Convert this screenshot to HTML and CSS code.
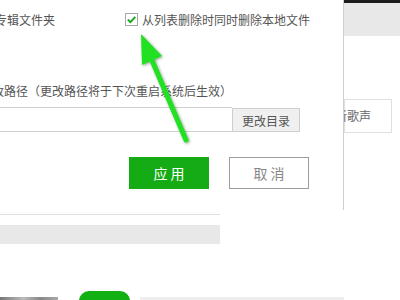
FILE: index.html
```html
<!DOCTYPE html>
<html>

<head>
	<meta charset="utf-8">
	<title>设置</title>
	<link rel="stylesheet" href="styles.css">
</head>

<body>
	<div class="page">
		<div class="main">
			<div class="rule"></div>
			<div class="band"></div>
			<div class="bottom">
				<div class="thumb"></div>
				<div class="pill"></div>
				<div class="line"></div>
			</div>
		</div>
		<div class="side">
			<div class="topbar"></div>
			<div class="tabs"></div>
			<div class="songbox">新歌声</div>
		</div>
	</div>

	<div class="dialog">
		<div class="row-check">
			<span class="album">专辑文件夹</span>
			<label class="check">
				<span class="box">
					<svg width="11" height="11" viewBox="0 0 11 11">
						<path d="M1.8 5.6 L4.4 8.1 L9.3 2.9" fill="none" stroke="#1aa61a" stroke-width="2" />
					</svg>
				</span>
				从列表删除时同时删除本地文件
			</label>
		</div>
		<div class="path-tip">改路径（更改路径将于下次重启系统后生效）</div>
		<div class="path-row">
			<input type="text" class="path-input" value="">
			<button class="btn-dir">更改目录</button>
		</div>
		<div class="actions">
			<button class="btn-ok">应 用</button>
			<button class="btn-cancel">取 消</button>
		</div>
	</div>

	<svg class="arrow" width="400" height="300" viewBox="0 0 400 300">
		<line x1="151" y1="58" x2="186" y2="140" stroke="#22e022" stroke-width="5" stroke-linecap="round" />
		<polygon points="141,34 142,65 162,56" fill="#22e022" />
	</svg>
</body>

</html>
```

FILE: styles.css
```css
body {
	margin: 0;
	width: 400px;
	height: 300px;
	overflow: hidden;
	position: relative;
	background: #fff;
	font-family: "Noto Sans CJK SC", "Noto Sans", sans-serif;
	color: #555;
}

.page {
	display: grid;
	grid-template-columns: 344px 56px;
	height: 300px;
}

.main {
	padding-top: 214px;
}

.rule {
	width: 220px;
	border-top: 1px solid #e2e2e2;
}

.band {
	width: 220px;
	height: 19px;
	margin-top: 10px;
	background: #e8e8e8;
}

.bottom {
	display: flex;
	align-items: flex-start;
	margin-top: 47px;
}

.thumb {
	width: 58px;
	height: 10px;
	margin-top: 6px;
	background: linear-gradient(90deg, #777, #bbb 40%, #888 70%, #aaa);
}

.pill {
	width: 51px;
	height: 20px;
	margin-left: 21px;
	border-radius: 12px;
	background: #12b012;
}

.line {
	flex: 1;
	height: 3px;
	margin: 6px 0 0 10px;
	background: #eee;
}

.topbar {
	height: 3px;
	background: #1c1c1c;
}

.tabs {
	height: 33px;
	background: #e8e8e8;
}

.songbox {
	width: 48px;
	height: 34px;
	margin-top: 63px;
	box-sizing: border-box;
	border: 1px solid #e0e0e0;
	padding-right: 20px;
	font-size: 12px;
	line-height: 32px;
	text-align: right;
	white-space: nowrap;
	direction: rtl;
	color: #666;
}

/* 设置弹窗 */
.dialog {
	position: absolute;
	top: 0;
	left: -8px;
	width: 352px;
	height: 210px;
	box-sizing: border-box;
	padding-top: 12px;
	background: #fff;
	border-right: 1px solid #cfcfcf;
	font-size: 12px;
}

.row-check {
	display: flex;
	align-items: center;
	height: 15px;
	line-height: 15px;
}

.album {
	margin-left: 3px;
}

.check {
	display: flex;
	align-items: center;
	margin-left: 70px;
}

.box {
	display: flex;
	align-items: center;
	justify-content: center;
	width: 13px;
	height: 13px;
	box-sizing: border-box;
	border: 1px solid #a8a8a8;
	margin-right: 4px;
	background: #fff;
}

.path-tip {
	margin-top: 56px;
	line-height: 16px;
	white-space: nowrap;
}

.path-row {
	display: flex;
	margin-top: 8px;
	height: 25px;
}

.path-input {
	width: 241px;
	height: 25px;
	box-sizing: border-box;
	margin: 0 0 0 -1px;
	border: 1px solid #cfcfcf;
	border-right: none;
	outline: none;
	padding: 0;
}

.btn-dir {
	width: 68px;
	height: 24px;
	margin-top: 1px;
	box-sizing: border-box;
	border: 1px solid #cfcfcf;
	background: #f0f0f0;
	color: #555;
	font-family: inherit;
	font-size: 12px;
	padding: 0;
}

.actions {
	display: flex;
	gap: 20px;
	margin: 25px 0 0 137px;
}

.btn-ok,
.btn-cancel {
	width: 80px;
	height: 32px;
	box-sizing: border-box;
	font-family: inherit;
	font-size: 14px;
	padding: 0;
}

.btn-ok {
	border: none;
	background: #14ab14;
	color: #fff;
}

.btn-cancel {
	border: 1px solid #9d9d9d;
	background: #fff;
	color: #888;
}

.arrow {
	position: absolute;
	top: 0;
	left: 0;
	filter: drop-shadow(1px 1px 1.5px rgba(0, 60, 0, 0.45));
}
```
